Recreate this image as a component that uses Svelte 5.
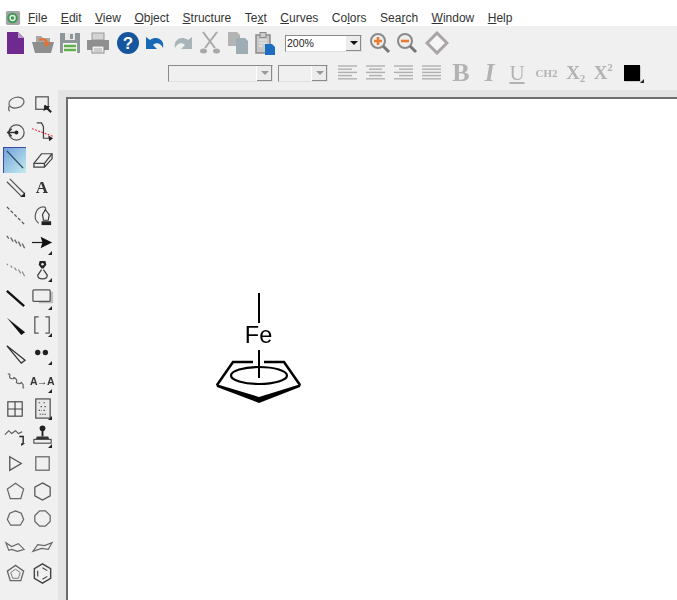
<script>
  const menus = [
    ["", "F", "ile"], ["", "E", "dit"], ["", "V", "iew"], ["", "O", "bject"], ["", "S", "tructure"],
    ["Te", "x", "t"], ["", "C", "urves"], ["Co", "l", "ors"], ["Sea", "r", "ch"], ["", "W", "indow"], ["", "H", "elp"]
  ];
  const aligns = [
    [[2, 18], [2, 13], [2, 18], [2, 13], [2, 18]],
    [[2, 18], [5, 15], [2, 18], [5, 15], [2, 18]],
    [[2, 18], [7, 18], [2, 18], [7, 18], [2, 18]],
    [[2, 18], [2, 18], [2, 18], [2, 18], [2, 18]]
  ];
</script>

<div class="app">
  <div class="menubar">
    <svg class="appicon" width="16" height="16" viewBox="0 0 18 18">
      <rect x="1" y="1" width="16" height="16" rx="2" fill="#a4a4a4" />
      <circle cx="8.500" cy="9" r="6" fill="#3f9a58" />
      <circle cx="8.500" cy="9" r="2.800" fill="none" stroke="#e6f4e6" stroke-width="1.500" />
    </svg>
    {#each menus as m}
      <span class="menu">{m[0]}<u>{m[1]}</u>{m[2]}</span>
    {/each}
  </div>

  <div class="toolbars">
    <div class="row first">
      <span class="tb"><svg width="24" height="24" viewBox="0 0 24 24"><path d="M4 1h11l6 6v16H4z" fill="#6e2a8e" /><path d="M15 1l6 6h-6z" fill="#b79ac6" /></svg></span>
      <span class="tb"><svg width="24" height="24" viewBox="0 0 24 24"><path d="M5 5h5l2 2h7v4H5z" fill="#a8a8a8" /><path d="M1 11h22l-3 11H4z" fill="#8e8e8e" /><path d="M8 9c5-2 8 0 8 4" fill="none" stroke="#e8702a" stroke-width="2" /><path d="M12.500 12l3.500 4 3.500-5z" fill="#e8702a" /></svg></span>
      <span class="tb"><svg width="24" height="24" viewBox="0 0 24 24"><path d="M2 2h20v20H2z" fill="#8d9698" /><rect x="7" y="2" width="10" height="7" fill="#e8e8e8" /><rect x="12" y="3" width="3" height="5" fill="#8d9698" /><rect x="5" y="12" width="14" height="10" fill="#f4f4f4" /><path d="M6 15h12M6 19h12" stroke="#5fb04a" stroke-width="2.400" /></svg></span>
      <span class="tb"><svg width="24" height="24" viewBox="0 0 24 24"><rect x="6" y="2" width="12" height="7" fill="#d4d4d4" stroke="#999" /><path d="M1 9h22v10H1z" fill="#8f8f8f" /><rect x="6" y="15" width="12" height="7" fill="#eee" stroke="#888" /><path d="M8 18h8M8 20h8" stroke="#aaa" /></svg></span>
      <span class="tb gap"><svg width="24" height="24" viewBox="0 0 24 24"><circle cx="12" cy="12" r="11" fill="#17569e" /><text x="12" y="18" class="help">?</text></svg></span>
      <span class="tb"><svg width="24" height="24" viewBox="0 0 24 24"><path d="M3 6v12h11l-4-4c3-3 8-2 10 3 2-8-6-13-13-8z" fill="#1769b5" /></svg></span>
      <span class="tb"><svg width="24" height="24" viewBox="0 0 24 24"><path d="M21 6v12H10l4-4c-3-3-8-2-10 3-2-8 6-13 13-8z" fill="#a9b4b9" /></svg></span>
      <span class="tb"><svg width="24" height="24" viewBox="0 0 24 24"><path d="M5 1l12 16M19 1L7 17" stroke="#a8a8a8" stroke-width="2" fill="none" /><ellipse cx="5.500" cy="20" rx="3.500" ry="2.500" fill="#a8a8a8" /><ellipse cx="18.500" cy="20" rx="3.500" ry="2.500" fill="#a8a8a8" /></svg></span>
      <span class="tb"><svg width="24" height="24" viewBox="0 0 24 24"><path d="M2 1h9l3 3v11H2z" fill="#b4b4b4" /><path d="M10 7h9l3 3v13H10z" fill="#9eadb4" /></svg></span>
      <span class="tb"><svg width="24" height="24" viewBox="0 0 24 24"><rect x="3" y="4" width="14" height="18" fill="#c8c8c8" stroke="#8a8a8a" stroke-width="1.500" /><rect x="7" y="1.500" width="6" height="5" fill="#ccc" stroke="#888" /><path d="M6 9h8M6 12h8M6 15h4" stroke="#eee" /><path d="M12 13h7l3 3v8H12z" fill="#1c6fc0" /></svg></span>
      <span class="combo zoom"><span class="val">200%</span><span class="drop"><i></i></span></span>
      <span class="tb zin"><svg width="24" height="24" viewBox="0 0 24 24"><circle cx="10" cy="10" r="7" fill="#eee" stroke="#8a8a8a" stroke-width="2" /><path d="M15 15l6 6" stroke="#777" stroke-width="3" /><path d="M6 10h8M10 6v8" stroke="#ea7a30" stroke-width="2.600" /></svg></span>
      <span class="tb"><svg width="24" height="24" viewBox="0 0 24 24"><circle cx="10" cy="10" r="7" fill="#eee" stroke="#8a8a8a" stroke-width="2" /><path d="M15 15l6 6" stroke="#777" stroke-width="3" /><path d="M6 10h8" stroke="#ea7a30" stroke-width="2.600" /></svg></span>
      <span class="tb diamond"><svg width="24" height="24" viewBox="0 0 24 24"><path d="M12 2l10 10-10 10L2 12z" fill="#f5f5f5" stroke="#a9a4a8" stroke-width="3" /></svg></span>
    </div>

    <div class="row second">
      <span class="combo font"><span class="drop off"><i></i></span></span>
      <span class="combo size"><span class="drop off"><i></i></span></span>
      <span class="aligns">
        {#each aligns as lines}
          <span class="tb">
            <svg width="24" height="20" viewBox="0 0 24 20">
              {#each lines as l, i}
                <path d="M{l[0] + 1} {3 + i * 3.2}H{l[1] + 4}" stroke="#b0b0b0" stroke-width="1.400" />
              {/each}
            </svg>
          </span>
        {/each}
      </span>
      <span class="tb fmt b">B</span>
      <span class="tb fmt i">I</span>
      <span class="tb fmt un">U</span>
      <span class="tb fmt ch"><span>CH<sub>2</sub></span></span>
      <span class="tb fmt xs"><span>X<sub>2</sub></span></span>
      <span class="tb fmt xs"><span>X<sup>2</sup></span></span>
      <span class="tb swatch"><i></i></span>
    </div>
  </div>
  <div class="strip"></div>

  <div class="main">
    <div class="palette">
      <span class="tool"><svg viewBox="0 0 24 24"><ellipse cx="13" cy="10" rx="8" ry="5.500" transform="rotate(-15 13 10)" fill="none" stroke="#666" stroke-width="1.300" /><path d="M6 13c-2 3-1 5 0 6" fill="none" stroke="#666" stroke-width="1.300" /></svg></span>
      <span class="tool"><svg viewBox="0 0 24 24"><rect x="5" y="4" width="13" height="13" fill="none" stroke="#555" stroke-width="1.300" /><path d="M14 13l7 7" stroke="#222" stroke-width="2.200" /><path d="M13 19l1-6 6 1z" fill="#222" /></svg></span>

      <span class="tool"><svg viewBox="0 0 24 24"><circle cx="13" cy="12" r="8" fill="none" stroke="#555" stroke-width="1.300" /><circle cx="13" cy="12" r="2" fill="#222" /><path d="M3 12h10M8 8l-4 4 4 4" fill="none" stroke="#333" stroke-width="1.400" /></svg></span>
      <span class="tool"><svg viewBox="0 0 24 24"><path d="M1 8l22 8" stroke="#f0304a" stroke-width="1.200" stroke-dasharray="2 1.500" /><path d="M6 2h5l2 4v12h8" fill="none" stroke="#444" stroke-width="1.300" /><path d="M18 15l5 3-4 3z" fill="#222" /></svg></span>

      <span class="tool active"><svg viewBox="0 0 24 24"><path d="M4 3l17 18" stroke="#2f4d66" stroke-width="1.500" /></svg></span>
      <span class="tool"><svg viewBox="0 0 24 24"><path d="M3 16l8-10h11v5l-8 9H3z" fill="none" stroke="#444" stroke-width="1.300" /><path d="M3 16h11v4M14 16l8-10" fill="none" stroke="#444" stroke-width="1.300" /></svg></span>

      <span class="tool"><svg viewBox="0 0 24 24"><path d="M3 6l15 15M6 3l15 15" stroke="#555" stroke-width="1.300" /><path d="M17 22l5-5v5z" fill="#222" /></svg></span>
      <span class="tool"><span class="lettera">A</span></span>

      <span class="tool"><svg viewBox="0 0 24 24"><path d="M3 3l19 19" stroke="#555" stroke-width="1.300" stroke-dasharray="3.500 2" /></svg></span>
      <span class="tool"><svg viewBox="0 0 24 24"><path d="M8 20C1 15 5 3 13 3c3 0 3 3 1 4" fill="none" stroke="#555" stroke-width="1.200" /><path d="M15 6l4 5-1 6h-5l-1-6z" fill="none" stroke="#333" stroke-width="1.200" /><rect x="11" y="18" width="10" height="4" fill="#222" /></svg></span>

      <span class="tool"><svg viewBox="0 0 24 24"><path d="M3 5l2 3M7 7l2.500 4M11 9l2.500 4M15 11l2.500 5M19 13l2.500 5" stroke="#666" stroke-width="1.400" /></svg></span>
      <span class="tool more"><svg viewBox="0 0 24 24"><path d="M1 12h12" stroke="#222" stroke-width="1.300" /><path d="M10 6l12 6-12 6 2-6z" fill="#111" /></svg></span>

      <span class="tool"><svg viewBox="0 0 24 24"><path d="M3 5l1 1.500M7 7l1.500 2M11 9l2 3M15 11l2.500 4M19 13l2.500 5" stroke="#888" stroke-width="1.200" /></svg></span>
      <span class="tool more"><svg viewBox="0 0 24 24"><path d="M9 2h6l1 4-3 4h-2L8 6z" fill="#222" /><circle cx="12" cy="5.500" r="1.300" fill="#eee" /><path d="M11 11L7 17c0 5 10 5 10 0l-4-6" fill="none" stroke="#444" stroke-width="1.300" /></svg></span>

      <span class="tool"><svg viewBox="0 0 24 24"><path d="M3 5l18 16" stroke="#111" stroke-width="2.400" /></svg></span>
      <span class="tool more"><svg viewBox="0 0 24 24"><rect x="8" y="6" width="15" height="12" fill="#aaa" opacity=".7" /><rect x="2" y="4" width="18" height="12" rx="1" fill="#f0f0f0" stroke="#555" stroke-width="1.300" /></svg></span>

      <span class="tool"><svg viewBox="0 0 24 24"><path d="M3 4l19 15-4 3z" fill="#111" /></svg></span>
      <span class="tool more"><svg viewBox="0 0 24 24"><path d="M8 3H4v17h4M15 3h4v17h-4" fill="none" stroke="#555" stroke-width="1.300" /></svg></span>

      <span class="tool"><svg viewBox="0 0 24 24"><path d="M3 4l19 15-4 3z" fill="none" stroke="#333" stroke-width="1.300" /></svg></span>
      <span class="tool more"><svg viewBox="0 0 24 24"><circle cx="7" cy="11" r="2.800" fill="#222" /><circle cx="15" cy="11" r="2.800" fill="#222" /></svg></span>

      <span class="tool"><svg viewBox="0 0 24 24"><path d="M4 5c5 0-1 4 4 5s0-3 4 0-2 4 3 5 1-3 4 0-1 4 2 5" fill="none" stroke="#666" stroke-width="1.300" /></svg></span>
      <span class="tool more"><span class="ata">A→A</span></span>

      <span class="tool"><svg viewBox="0 0 24 24"><rect x="4" y="5" width="15" height="15" fill="none" stroke="#444" stroke-width="1.200" /><path d="M11.500 5v15M4 12.500h15" stroke="#444" stroke-width="1.200" /></svg></span>
      <span class="tool more"><svg viewBox="0 0 24 24"><rect x="5" y="2" width="15" height="20" fill="#e8e8e8" stroke="#444" stroke-width="1.200" /><path d="M8 6h2M13 6h2M10 10h2M14 10h2M8 14h3M13 14h2M9 18h7" stroke="#555" stroke-width="1.200" stroke-dasharray="1.500 1" /></svg></span>

      <span class="tool"><svg viewBox="0 0 24 24"><path d="M1 11l4-4 3 3 4-3 3 3 4-2" fill="none" stroke="#555" stroke-width="1.200" /><path d="M16 13h4v7" fill="none" stroke="#222" stroke-width="1.400" /><path d="M18 23l4-3h-4z" fill="#111" /></svg></span>
      <span class="tool more"><svg viewBox="0 0 24 24"><circle cx="12" cy="4.500" r="3" fill="#222" /><path d="M11 7h2v6h-2z" fill="#222" /><path d="M6 13h12l1 3H5z" fill="#333" /><rect x="3" y="16" width="18" height="4" fill="#eee" stroke="#333" /></svg></span>

      <span class="tool"><svg viewBox="0 0 24 24"><path d="M6 5l12 7-12 7z" fill="none" stroke="#555" stroke-width="1.400" /></svg></span>
      <span class="tool"><svg viewBox="0 0 24 24"><rect x="5" y="5" width="14" height="14" fill="none" stroke="#666" stroke-width="1.300" /></svg></span>

      <span class="tool"><svg viewBox="0 0 24 24"><path d="M12 3.500l8.500 6-3 10h-11l-3-10z" fill="none" stroke="#666" stroke-width="1.300" /></svg></span>
      <span class="tool"><svg viewBox="0 0 24 24"><path d="M12 3l8 4.500v9L12 21l-8-4.500v-9z" fill="none" stroke="#555" stroke-width="1.300" /></svg></span>

      <span class="tool"><svg viewBox="0 0 24 24"><path d="M12 4l6 2.500L20.500 13l-3.500 6H7l-3.500-6L6 6.500z" fill="none" stroke="#666" stroke-width="1.300" /></svg></span>
      <span class="tool"><svg viewBox="0 0 24 24"><path d="M9 4h6l5 5v6l-5 5H9l-5-5V9z" fill="none" stroke="#666" stroke-width="1.300" /></svg></span>

      <span class="tool"><svg viewBox="0 0 24 24"><path d="M2 8l6 4 7-3 6 6-7 2-6-2-3 1z" fill="none" stroke="#666" stroke-width="1.200" /></svg></span>
      <span class="tool"><svg viewBox="0 0 24 24"><path d="M2 17l5-7 7 1 8-3-4 7-7-1z" fill="none" stroke="#666" stroke-width="1.200" /></svg></span>

      <span class="tool"><svg viewBox="0 0 24 24"><path d="M12 3.500l8.500 6-3 10h-11l-3-10z" fill="none" stroke="#666" stroke-width="1.400" /><path d="M12 7.500l5 3.500-2 6H9l-2-6z" fill="none" stroke="#777" stroke-width="1" /></svg></span>
      <span class="tool"><svg viewBox="0 0 24 24"><path d="M12 2l8.500 5v10L12 22l-8.500-5V7z" fill="none" stroke="#444" stroke-width="1.500" /><path d="M12 6l5 3M17 15l-5 3M7 15V9" fill="none" stroke="#444" stroke-width="1.200" /></svg></span>
    </div>

    <div class="gutter"></div>

    <div class="canvas">
      <svg class="structure" width="120" height="130" viewBox="200 280 120 130">
        <path d="M259 293v30M259 350v28" stroke="#000" stroke-width="2" fill="none" />
        <text x="258.500" y="343" class="atom">Fe</text>
        <path d="M253 362h-20l-16 23M264 362h20l16 23" stroke="#000" stroke-width="2.500" fill="none" />
        <path d="M216 384l43 13 42-13-1 3-41 16-42-16z" fill="#000" />
        <ellipse cx="259" cy="375.500" rx="28" ry="8.500" fill="none" stroke="#000" stroke-width="2.200" />
      </svg>
    </div>
  </div>
</div>

<style>
  :global(body) {
    margin: 0;
    background: #fff;
  }
  .app {
    width: 677px;
    height: 600px;
    display: flex;
    flex-direction: column;
    overflow: hidden;
    font-family: "Liberation Sans", Arial, sans-serif;
    filter: blur(0.45px);
  }
  .menubar {
    height: 26px;
    flex: none;
    display: flex;
    align-items: flex-end;
    gap: 13.500px;
    padding: 0 0 0 5px;
    box-sizing: border-box;
    background: #fff;
    font-size: 12px;
    line-height: 16px;
    color: #333;
  }
  .appicon {
    margin: 0 -6.500px 0 0;
  }
  .toolbars {
    flex: none;
    height: 64px;
    background: #f0f0f0;
    display: flex;
    flex-direction: column;
  }
  .strip {
    flex: none;
    height: 7px;
    margin-left: 58px;
    background: #e4e4e4;
  }
  .row {
    display: flex;
    align-items: center;
  }
  .first {
    height: 34px;
    padding-left: 1.500px;
  }
  .second {
    height: 26px;
    padding-left: 168px;
  }
  .tb {
    flex: none;
    width: 27.500px;
    display: flex;
    align-items: center;
    justify-content: center;
  }
  .tb.gap {
    margin-left: 2.500px;
  }
  .tb.zin {
    margin-left: 4px;
  }
  .tb.diamond {
    margin-left: 2.500px;
  }
  .help {
    font: bold 17px "Liberation Sans", sans-serif;
    fill: #fff;
    text-anchor: middle;
  }
  .combo {
    flex: none;
    box-sizing: border-box;
    height: 17px;
    display: flex;
    align-items: stretch;
    border: 1px solid #8a8a8a;
    border-right-color: #e0e0e0;
    border-bottom-color: #e0e0e0;
  }
  .zoom {
    width: 77px;
    margin-left: 6px;
    background: #fff;
    font-size: 10.500px;
    line-height: 14px;
    color: #222;
    padding-left: 1px;
  }
  .font {
    width: 105px;
  }
  .size {
    width: 50px;
    margin-left: 5px;
  }
  .drop {
    width: 15px;
    margin-left: auto;
    background: #ececec;
    border-left: 1px solid #fff;
    box-shadow: inset -1px -1px 0 #8a8a8a;
    display: flex;
    align-items: center;
    justify-content: center;
  }
  .drop i {
    width: 0;
    height: 0;
    border-left: 4px solid transparent;
    border-right: 4px solid transparent;
    border-top: 4px solid #111;
  }
  .drop.off i {
    border-top-color: #999;
  }
  .aligns {
    display: flex;
    margin-left: 5px;
  }
  .aligns .tb {
    width: 28px;
  }
  .fmt {
    font-family: "Liberation Serif", serif;
    color: #b2b2b2;
    height: 26px;
  }
  .b {
    font-size: 26px;
    font-weight: bold;
    width: 30px;
    margin-left: 1px;
  }
  .i {
    font-size: 25px;
    font-weight: bold;
    font-style: italic;
    width: 27px;
  }
  .un {
    font-size: 21px;
    text-decoration: underline;
    width: 28px;
  }
  .ch {
    font-size: 11px;
    font-weight: bold;
    width: 31px;
  }
  .ch sub {
    font-size: 11px;
    vertical-align: baseline;
  }
  .xs {
    font-size: 19px;
    font-weight: bold;
    width: 27.500px;
  }
  .xs sub,
  .xs sup {
    font-size: 11px;
    line-height: 0;
  }
  .xs sup {
    vertical-align: 8px;
  }
  .xs sub {
    vertical-align: -3px;
  }
  .swatch {
    position: relative;
    width: 30px;
  }
  .swatch i {
    width: 16px;
    height: 16px;
    background: #000;
    box-shadow: 1px 1px 0 #ccc;
  }
  .swatch::after,
  .more::after {
    content: "";
    position: absolute;
    right: 4px;
    bottom: 2px;
    width: 0;
    height: 0;
    border-left: 4px solid transparent;
    border-bottom: 4px solid #222;
  }
  .swatch::after {
    right: 3px;
    bottom: -2px;
  }
  .main {
    flex: 1;
    min-height: 0;
    display: flex;
    margin-top: -7px;
  }
  .palette {
    flex: none;
    width: 58px;
    box-sizing: border-box;
    background: #f0f0f0;
    padding: 1px 0 0 1.500px;
    display: grid;
    grid-template-columns: 27px 27px;
    grid-auto-rows: 27.600px;
    align-content: start;
  }
  .tool {
    position: relative;
    display: flex;
    align-items: center;
    justify-content: center;
  }
  .tool svg {
    width: 23px;
    height: 23px;
  }
  .tool.active {
    background: linear-gradient(135deg, #6f9fdd, #c4ecec);
    box-shadow: inset 1px 1px 0 #3a4aa0;
    margin: 1px 3px 1px 1px;
  }
  .lettera {
    font: bold 17px "Liberation Serif", serif;
    color: #333;
  }
  .ata {
    font: bold 10.500px "Liberation Sans", sans-serif;
    color: #333;
    white-space: nowrap;
    letter-spacing: -0.5px;
  }
  .gutter {
    flex: none;
    width: 8px;
    background: #e4e4e4;
  }
  .canvas {
    flex: 1;
    margin-top: 7px;
    background: #fff;
    border-top: 2px solid #6e6e6e;
    border-left: 2px solid #6e6e6e;
    position: relative;
  }
  .structure {
    position: absolute;
    left: 132px;
    top: 181px;
  }
  .atom {
    font: 23.500px "Liberation Sans", Arial, sans-serif;
    fill: #000;
    text-anchor: middle;
  }
</style>
